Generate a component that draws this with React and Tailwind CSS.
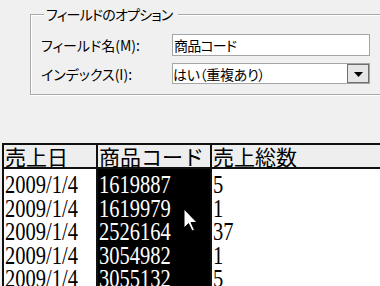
import React from "react";

const rows = [
  ["2009/1/4", "1619887", "5"],
  ["2009/1/4", "1619979", "1"],
  ["2009/1/4", "2526164", "37"],
  ["2009/1/4", "3054982", "1"],
  ["2009/1/4", "3055132", "5"],
];

const ui = "font-['Noto_Sans_CJK_JP',sans-serif] [font-feature-settings:'palt'] text-[14px] leading-[20px] text-black";
const cjk = "font-['Noto_Sans_CJK_JP',sans-serif] text-[21px] leading-[22px] text-black";

function Num({ children }) {
  return (
    <span className="inline-block origin-top scale-y-[1.22] whitespace-nowrap font-['Liberation_Serif',serif] text-[20.5px] leading-[19px]">
      {children}
    </span>
  );
}

export default function App() {
  return (
    <div className="relative h-[286px] w-[380px] overflow-hidden bg-[#f0f0f0]">
      {/* options group */}
      <div className="h-[143px] pl-[30px] pt-[4px]">
        <fieldset className="h-[91px] w-[400px] border border-[#a9a9a9] shadow-[inset_1px_1px_0_#ffffff,1px_1px_0_#ffffff]">
          <legend className={`ml-[13px] bg-[#f0f0f0] px-[2px] pr-[6px] tracking-[-0.8px] ${ui}`}>フィールドのオプション</legend>
          <div className="flex flex-col pl-[10px]">
            <div className="mt-[10px] flex items-center">
              <span className={`w-[131px] ${ui}`}>フィールド名(M):</span>
              <div className="flex h-[22px] w-[198px] items-center border border-[#a5a5a5] bg-white pl-[1px]">
                <span className={`tracking-[-0.8px] ${ui}`}>商品コード</span>
              </div>
            </div>
            <div className="mt-[7px] flex items-center">
              <span className={`w-[131px] ${ui}`}>インデックス(I):</span>
              <div className="flex h-[21px] w-[198px] items-center border border-[#a5a5a5] bg-white">
                <span className={`flex-1 tracking-[-0.3px] ${ui}`}>はい（重複あり）</span>
                <div className="flex h-[19px] w-[22px] items-center justify-center border border-[#6f6f6f] bg-[#e6e6e6]">
                  <svg width="9" height="6" viewBox="0 0 9 6" className="mt-[3px]">
                    <path d="M0 0 H9 L4.5 5 Z" fill="#000" />
                  </svg>
                </div>
              </div>
            </div>
          </div>
        </fieldset>
      </div>

      {/* datasheet */}
      <div className="ml-[2px] border-l-2 border-t-2 border-[#111]">
        <div className="grid grid-cols-[94px_114px_1fr]">
          <div className={`h-[24px] border-b-2 border-r-2 border-[#111] bg-[#eeeeee] pl-[1px] ${cjk}`}>売上日</div>
          <div className={`h-[24px] border-b-2 border-r-2 border-[#111] bg-[#eeeeee] pl-[1px] ${cjk}`}>商品コード</div>
          <div className={`h-[24px] border-b-2 border-[#111] bg-[#eeeeee] pl-[1px] ${cjk}`}>売上総数</div>
          {rows.map((r, i) => (
            <React.Fragment key={i}>
              <div className="h-[23.5px] border-r-2 border-[#111] bg-white pl-[1px] pt-[2px] text-black">
                <Num>{r[0]}</Num>
              </div>
              <div className="h-[23.5px] border-r-2 border-[#111] bg-black pl-[1px] pt-[2px] text-white">
                <Num>{r[1]}</Num>
              </div>
              <div className="h-[23.5px] bg-white pl-[1px] pt-[2px] text-black">
                <Num>{r[2]}</Num>
              </div>
            </React.Fragment>
          ))}
        </div>
      </div>

      {/* mouse cursor */}
      <svg className="absolute left-[183px] top-[208px]" width="16" height="26" viewBox="0 0 16 26">
        <path d="M1 1 L1 20 L5.5 15.5 L9 23 L11.5 22 L8 14.5 L14 14.5 Z" fill="#fff" stroke="#000" strokeWidth="1" strokeLinejoin="miter" />
      </svg>
    </div>
  );
}
